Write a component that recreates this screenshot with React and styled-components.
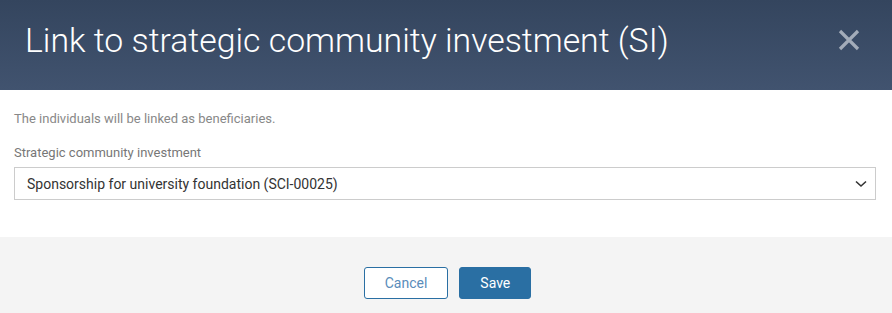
import React from "react";
import styled, { createGlobalStyle } from "styled-components";

const GlobalStyle = createGlobalStyle`
  html, body {
    margin: 0;
    padding: 0;
    background: #ffffff;
    font-family: Roboto, "Liberation Sans", sans-serif;
  }
`;

// Link to SI dialog
export default function App() {
  return (
    <>
      <GlobalStyle />
      <Dialog>
        <Header>
          <Title>Link to strategic community investment (SI)</Title>
          <CloseButton aria-label="Close">
            <svg width="22" height="22" viewBox="0 0 22 22">
              <path
                d="M2 2 L20 20 M20 2 L2 20"
                stroke="#a3acb9"
                strokeWidth="3.2"
                strokeLinecap="butt"
              />
            </svg>
          </CloseButton>
        </Header>

        <Body>
          <Note>The individuals will be linked as beneficiaries.</Note>
          <FieldLabel>Strategic community investment</FieldLabel>
          <Select>
            <SelectValue>Sponsorship for university foundation (SCI-00025)</SelectValue>
            <svg width="12" height="8" viewBox="0 0 12 8">
              <path d="M1 1.5 L6 6 L11 1.5" fill="none" stroke="#333" strokeWidth="1.6" />
            </svg>
          </Select>
        </Body>

        <Footer>
          <Button>Cancel</Button>
          <Button $primary>Save</Button>
        </Footer>
      </Dialog>
    </>
  );
}

const Dialog = styled.div`
  width: 892px;
  height: 313px;
  display: flex;
  flex-direction: column;
  background: #ffffff;
`;

const Header = styled.div`
  height: 90px;
  flex-shrink: 0;
  display: flex;
  align-items: center;
  justify-content: space-between;
  padding: 0 32px 0 25px;
  box-sizing: border-box;
  background: linear-gradient(to bottom, #34455e, #41536f);
`;

const Title = styled.h1`
  margin: 0 0 10px 0;
  font-weight: 300;
  font-size: 33.8px;
  color: #ffffff;
`;

const CloseButton = styled.button`
  background: none;
  border: none;
  padding: 0;
  margin-bottom: 10px;
  display: flex;
  cursor: pointer;
`;

const Body = styled.div`
  height: 147px;
  flex-shrink: 0;
  padding: 21px 16px 0 14px;
  box-sizing: border-box;
`;

const Note = styled.p`
  margin: 0 0 19px 0;
  font-size: 13px;
  color: #888888;
`;

const FieldLabel = styled.label`
  display: block;
  margin-bottom: 7px;
  font-size: 13px;
  color: #777777;
`;

const Select = styled.div`
  height: 33px;
  box-sizing: border-box;
  border: 1px solid #cccccc;
  display: flex;
  align-items: center;
  justify-content: space-between;
  padding: 0 8px 0 12px;
`;

const SelectValue = styled.span`
  font-size: 14px;
  color: #333333;
`;

const Footer = styled.div`
  flex: 1;
  background: #f4f4f4;
  display: flex;
  justify-content: center;
  align-items: flex-start;
  gap: 11px;
  padding: 30px 0 0 3px;
  box-sizing: border-box;
`;

const Button = styled.button`
  height: 32px;
  padding: 0 20px;
  min-width: ${(p) => (p.$primary ? "71px" : "83px")};
  border-radius: 3px;
  font-family: Roboto, "Liberation Sans", sans-serif;
  font-size: 14px;
  cursor: pointer;
  border: 1px solid #2a6fa3;
  background: ${(p) => (p.$primary ? "#2a6fa3" : "#ffffff")};
  color: ${(p) => (p.$primary ? "#ffffff" : "#5a8cba")};
`;
